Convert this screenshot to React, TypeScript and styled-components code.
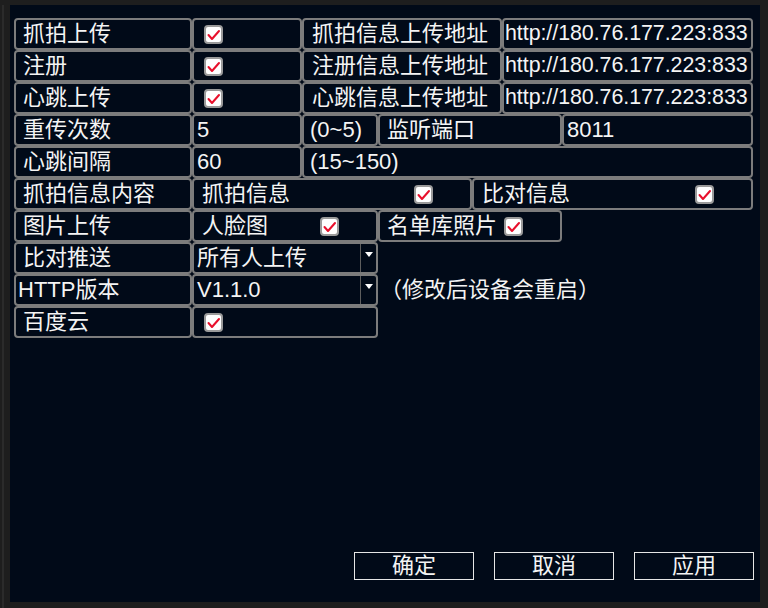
import React from "react";
import styled, { createGlobalStyle } from "styled-components";

const Global = createGlobalStyle`
  html, body { margin: 0; padding: 0; background: #1e1e1e; }
  body { width: 768px; height: 608px; overflow: hidden; }
  * { box-sizing: border-box; }
`;

const FONT = `"Liberation Sans", "Noto Sans CJK SC", sans-serif`;

const Frame = styled.div`
  display: flex;
  padding: 5px 0 0 2px;
  height: 608px;
`;

const Rail = styled.div`
  width: 2px;
  height: 603px;
  background: #2b2b2b;
  margin-right: 6px;
`;

const Panel = styled.div`
  width: 750px;
  height: 597px;
  background: #010a18;
  display: flex;
  flex-direction: column;
  padding: 13px 6px 22px 4px;
  font-family: ${FONT};
  color: #f4f4f4;
`;

const Form = styled.div`
  display: flex;
  flex-direction: column;
`;

const Row = styled.div`
  display: flex;
  align-items: center;
  height: 32px;
`;

const Cell = styled.div<{ $w: number; $pad?: number }>`
  width: ${(p) => p.$w}px;
  height: 32px;
  flex: none;
  border: 2px solid #7c7c7c;
  border-radius: 4px;
  display: flex;
  align-items: center;
  padding-left: ${(p) => (p.$pad ?? 7)}px;
  font-size: 22px;
  line-height: 1;
  white-space: nowrap;
  overflow: hidden;
`;

const UrlCell = styled(Cell)`
  font-size: 21.4px;
  letter-spacing: -0.05px;
`;

const SplitCell = styled(Cell)`
  justify-content: space-between;
  padding-right: 37px;
`;

const Text = styled.span`
  font-size: 22px;
  line-height: 1;
`;

const Note = styled.span`
  font-size: 22px;
  line-height: 1;
  margin-left: 2px;
`;

const Box = styled.span<{ $ml?: number }>`
  width: 19px;
  height: 19px;
  flex: none;
  margin-left: ${(p) => p.$ml ?? 0}px;
  background: #ffffff;
  border: 2px solid #9a9a9a;
  border-radius: 4px;
  display: flex;
  align-items: center;
  justify-content: center;
`;

const DropValue = styled.span`
  flex: 1;
  font-size: 22px;
  line-height: 1;
`;

const DropDivider = styled.span`
  width: 1px;
  align-self: stretch;
  background: #5e5e5e;
`;

const DropArrow = styled.span`
  width: 15px;
  align-self: stretch;
  display: flex;
  justify-content: center;
  padding-top: 8px;
  &::after {
    content: "";
    width: 0;
    height: 0;
    border-left: 4px solid transparent;
    border-right: 4px solid transparent;
    border-top: 5px solid #ffffff;
  }
`;

const Footer = styled.div`
  margin-top: auto;
  display: flex;
  justify-content: flex-end;
  gap: 20px;
`;

const Button = styled.button`
  width: 120px;
  height: 28px;
  background: transparent;
  border: 1px solid #e6e6e6;
  color: #f4f4f4;
  font-family: ${FONT};
  font-size: 22px;
  line-height: 1;
  padding: 0;
  display: flex;
  align-items: center;
  justify-content: center;
`;

const Check = ({ ml }: { ml?: number }) => (
  <Box $ml={ml}>
    <svg width="15" height="15" viewBox="0 0 15 15">
      <path d="M2.5 8 L6 12 L13 4" fill="none" stroke="#e8102c" strokeWidth="2" strokeLinecap="round" strokeLinejoin="round" />
    </svg>
  </Box>
);

const Dropdown = ({ w, value }: { w: number; value: string }) => (
  <Cell $w={w} $pad={3}>
    <DropValue>{value}</DropValue>
    <DropDivider />
    <DropArrow />
  </Cell>
);

const URL = "http://180.76.177.223:833";

export default function App() {
  return (
    <>
      <Global />
      <Frame>
        <Rail />
        <Panel>
          <Form>
            <Row>
              <Cell $w={178}>抓拍上传</Cell>
              <Cell $w={110} $pad={10}><Check /></Cell>
              <Cell $w={200} $pad={8}>抓拍信息上传地址</Cell>
              <UrlCell $w={251} $pad={1}>{URL}</UrlCell>
            </Row>
            <Row>
              <Cell $w={178}>注册</Cell>
              <Cell $w={110} $pad={10}><Check /></Cell>
              <Cell $w={200} $pad={8}>注册信息上传地址</Cell>
              <UrlCell $w={251} $pad={1}>{URL}</UrlCell>
            </Row>
            <Row>
              <Cell $w={178}>心跳上传</Cell>
              <Cell $w={110} $pad={10}><Check /></Cell>
              <Cell $w={200} $pad={8}>心跳信息上传地址</Cell>
              <UrlCell $w={251} $pad={1}>{URL}</UrlCell>
            </Row>
            <Row>
              <Cell $w={178}>重传次数</Cell>
              <Cell $w={110} $pad={3}>5</Cell>
              <Cell $w={76} $pad={6}>(0~5)</Cell>
              <Cell $w={184} $pad={7}>监听端口</Cell>
              <Cell $w={191} $pad={3}>8011</Cell>
            </Row>
            <Row>
              <Cell $w={178}>心跳间隔</Cell>
              <Cell $w={110} $pad={3}>60</Cell>
              <Cell $w={451} $pad={6}>(15~150)</Cell>
            </Row>
            <Row>
              <Cell $w={178}>抓拍信息内容</Cell>
              <SplitCell $w={280} $pad={8}><Text>抓拍信息</Text><Check /></SplitCell>
              <SplitCell $w={281} $pad={8}><Text>比对信息</Text><Check /></SplitCell>
            </Row>
            <Row>
              <Cell $w={178}>图片上传</Cell>
              <SplitCell $w={186} $pad={8}><Text>人脸图</Text><Check /></SplitCell>
              <Cell $w={184} $pad={7}><Text>名单库照片</Text><Check ml={7} /></Cell>
            </Row>
            <Row>
              <Cell $w={178}>比对推送</Cell>
              <Dropdown w={186} value="所有人上传" />
            </Row>
            <Row>
              <Cell $w={178} $pad={2}>HTTP版本</Cell>
              <Dropdown w={186} value="V1.1.0" />
              <Note>（修改后设备会重启）</Note>
            </Row>
            <Row>
              <Cell $w={178}>百度云</Cell>
              <Cell $w={186} $pad={10}><Check /></Cell>
            </Row>
          </Form>
          <Footer>
            <Button>确定</Button>
            <Button>取消</Button>
            <Button>应用</Button>
          </Footer>
        </Panel>
      </Frame>
    </>
  );
}
